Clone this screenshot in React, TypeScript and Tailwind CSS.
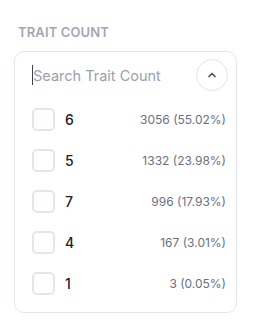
import { ChevronUp } from 'lucide-react';

const traits = [
  { label: '6', value: '3056 (55.02%)' },
  { label: '5', value: '1332 (23.98%)' },
  { label: '7', value: '996 (17.93%)' },
  { label: '4', value: '167 (3.01%)' },
  { label: '1', value: '3 (0.05%)' },
];

export default function App() {
  return (
    <div
      className="min-h-screen bg-white px-[14px] pt-[23px]"
      style={{ fontFamily: 'Inter, "Noto Sans", sans-serif' }}
    >
      <h3 className="pl-1 text-[13px] font-semibold uppercase leading-[18px] tracking-[0.01em] text-[#a3a7b3]">
        Trait Count
      </h3>
      <div className="mt-[10px] w-[223px] rounded-[10px] border border-[#e4e6eb] pb-2">
        <div className="mt-[7px] flex h-8 items-center pl-[17px] pr-2">
          <div className="relative min-w-0 flex-1">
            <input
              className="w-full bg-transparent pl-px text-[14.5px] text-[#111827] outline-none placeholder:text-[#9ca0ab]"
              placeholder="Search Trait Count"
            />
            {/* caret */}
            <span className="absolute left-0 top-1/2 h-[20px] w-px -translate-y-1/2 bg-[#374151]" />
          </div>
          <button className="flex h-8 w-8 items-center justify-center rounded-full border border-[#e4e6eb] text-[#4b5563]">
            <ChevronUp size={12} strokeWidth={3.5} />
          </button>
        </div>
        <div className="mt-[8px]">
          {traits.map((t) => (
            <label
              key={t.label}
              className="flex h-[41px] items-center pl-[17px] pr-[10px]"
            >
              <span className="h-[23px] w-[23px] shrink-0 rounded-[5px] border-2 border-[#e4e6eb]" />
              <span className="ml-[10px] text-[14px] font-medium text-[#1f2023]">
                {t.label}
              </span>
              <span className="ml-auto text-[12px] text-[#6b7080]">{t.value}</span>
            </label>
          ))}
        </div>
      </div>
    </div>
  );
}
